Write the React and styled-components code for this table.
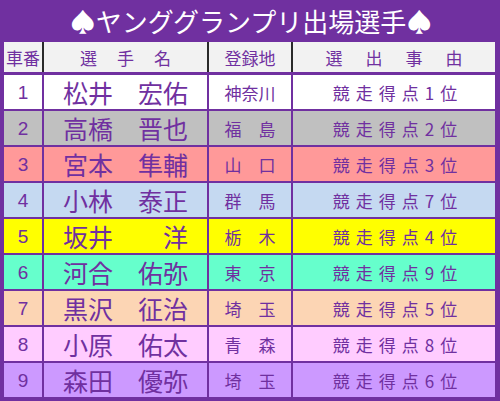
import React from 'react';
import styled, { createGlobalStyle } from 'styled-components';

const GlobalStyle = createGlobalStyle`
  html, body {
    margin: 0;
    padding: 0;
    background: #7030a0;
  }
  body {
    font-family: "Noto Sans CJK JP", "Noto Sans", sans-serif;
  }
`;

const Page = styled.div`
  width: 500px;
  height: 401px;
  background: #7030a0;
  overflow: hidden;
`;

const Title = styled.h1`
  margin: 0;
  height: 42px;
  display: flex;
  align-items: center;
  justify-content: center;
  color: #fff;
  font-size: 26px;
  font-weight: 400;
  line-height: 1;
  padding-left: 2px;
`;

const cols = '38px 163px 82px 1fr';

const HeaderRow = styled.div`
  margin: 0 5px 0 4px;
  display: grid;
  grid-template-columns: ${cols};
  column-gap: 2px;
  background: #2a2a2a;
  height: 30px;
`;

const HeadCell = styled.div`
  background: #f2f2f2;
  color: #7030a0;
  display: flex;
  align-items: center;
  justify-content: center;
  font-size: 17px;
  letter-spacing: ${(p) => p.$spacing || 0};
  padding-left: ${(p) => p.$spacing || 0};
  white-space: pre;
`;

const Body = styled.div`
  margin: 3px 5px 0 4px;
  display: grid;
  grid-template-columns: ${cols};
  grid-auto-rows: 34px;
  gap: 2px;
  background: #7030a0;
`;

const Cell = styled.div`
  background: ${(p) => p.$bg};
  color: #7030a0;
  display: flex;
  align-items: center;
  justify-content: center;
  white-space: pre;
  line-height: 1;
`;

const NumCell = styled(Cell)`
  font-family: "Liberation Sans Narrow", "Liberation Sans", sans-serif;
  font-size: 19px;
`;

const NameCell = styled(Cell)`
  font-size: 25px;
`;

const PlaceCell = styled(Cell)`
  font-size: 17px;
`;

const ReasonCell = styled(Cell)`
  font-size: 17px;
  letter-spacing: 6px;
  padding-left: 8px;
`;

const riders = [
  { no: 1, name: '松井　宏佑', place: '神奈川', rank: '1', bg: '#ffffff' },
  { no: 2, name: '高橋　晋也', place: '福　島', rank: '2', bg: '#c0c0c0' },
  { no: 3, name: '宮本　隼輔', place: '山　口', rank: '3', bg: '#ff9999' },
  { no: 4, name: '小林　泰正', place: '群　馬', rank: '7', bg: '#c5d9f1' },
  { no: 5, name: '坂井　　洋', place: '栃　木', rank: '4', bg: '#ffff00' },
  { no: 6, name: '河合　佑弥', place: '東　京', rank: '9', bg: '#66ffcc' },
  { no: 7, name: '黒沢　征治', place: '埼　玉', rank: '5', bg: '#fcd5b4' },
  { no: 8, name: '小原　佑太', place: '青　森', rank: '8', bg: '#ffccff' },
  { no: 9, name: '森田　優弥', place: '埼　玉', rank: '6', bg: '#cc99ff' },
];

export default function App() {
  return (
    <Page>
      <GlobalStyle />
      <Title>♠ヤンググランプリ出場選手♠</Title>
      <HeaderRow>
        <HeadCell>車番</HeadCell>
        <HeadCell $spacing="20px">選手名</HeadCell>
        <HeadCell>登録地</HeadCell>
        <HeadCell $spacing="23px">選出事由</HeadCell>
      </HeaderRow>
      <Body>
        {riders.map((r) => (
          <React.Fragment key={r.no}>
            <NumCell $bg={r.bg}>{r.no}</NumCell>
            <NameCell $bg={r.bg}>{r.name}</NameCell>
            <PlaceCell $bg={r.bg}>{r.place}</PlaceCell>
            <ReasonCell $bg={r.bg}>競走得点{r.rank}位</ReasonCell>
          </React.Fragment>
        ))}
      </Body>
    </Page>
  );
}
